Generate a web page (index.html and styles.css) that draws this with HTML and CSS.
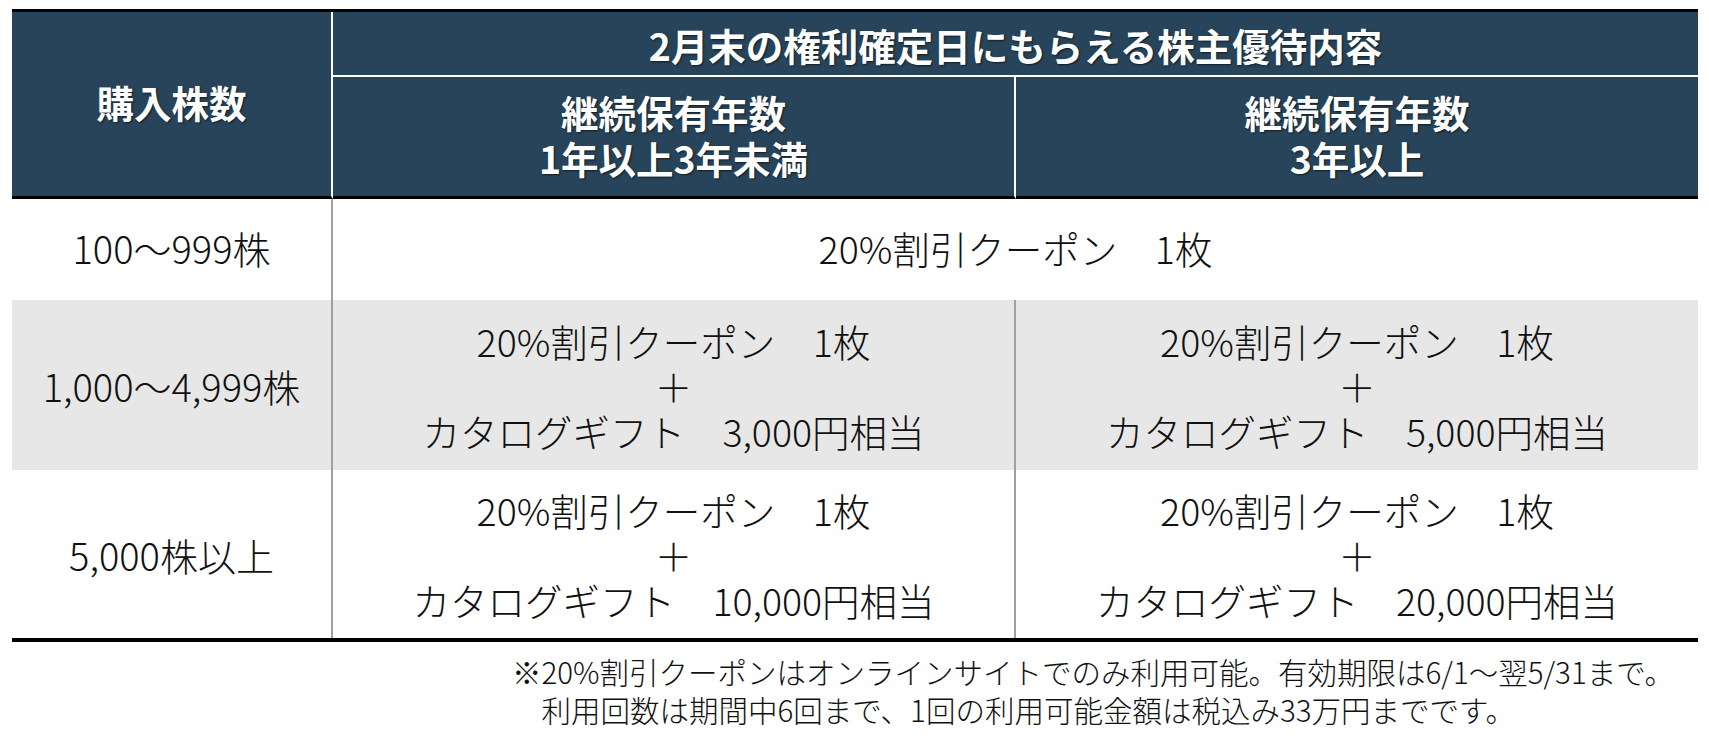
FILE: index.html
```html
<!DOCTYPE html>
<html lang="ja">
<head>
<meta charset="utf-8">
<title>株主優待内容</title>
<link rel="stylesheet" href="styles.css">
</head>
<body>
<div class="page">
  <div class="grid">
    <div class="hd corner">購入株数</div>
    <div class="hd title">2月末の権利確定日にもらえる株主優待内容</div>
    <div class="hd sub mid"><span class="ln">継続保有年数</span><span class="ln">1年以上3年未満</span></div>
    <div class="hd sub"><span class="ln">継続保有年数</span><span class="ln">3年以上</span></div>

    <div class="cell key r1">100～999株</div>
    <div class="cell span r1">20%割引クーポン　1枚</div>

    <div class="cell key r2 gray">1,000～4,999株</div>
    <div class="cell r2 gray mid"><span class="ln">20%割引クーポン　1枚</span><span class="ln">＋</span><span class="ln">カタログギフト　3,000円相当</span></div>
    <div class="cell r2 gray"><span class="ln">20%割引クーポン　1枚</span><span class="ln">＋</span><span class="ln">カタログギフト　5,000円相当</span></div>

    <div class="cell key r3">5,000株以上</div>
    <div class="cell r3 mid"><span class="ln">20%割引クーポン　1枚</span><span class="ln">＋</span><span class="ln">カタログギフト　10,000円相当</span></div>
    <div class="cell r3"><span class="ln">20%割引クーポン　1枚</span><span class="ln">＋</span><span class="ln">カタログギフト　20,000円相当</span></div>
  </div>
  <div class="note">
    <p>※20%割引クーポンはオンラインサイトでのみ利用可能。有効期限は6/1～翌5/31まで。</p>
    <p>　利用回数は期間中6回まで、1回の利用可能金額は税込み33万円までです。</p>
  </div>
</div>
</body>
</html>
```

FILE: styles.css
```css
html, body {
  margin: 0;
  padding: 0;
  background: #ffffff;
}

body {
  font-family: "Noto Sans CJK JP", "Noto Sans", sans-serif;
  color: #111111;
}

.page {
  padding: 9px 0 0 12px;
}

.grid {
  display: grid;
  grid-template-columns: 321px 683px 682px;
  grid-template-rows: 65px 122px 101px 170px 168px;
  width: 1686px;
  border-top: 3px solid #000000;
  border-bottom: 4px solid #000000;
}

.hd {
  background: #27445a;
  color: #ffffff;
  font-weight: 700;
  font-size: 37.5px;
  line-height: 46px;
  text-align: center;
  display: flex;
  flex-direction: column;
  align-items: center;
  justify-content: center;
  text-shadow: 1px 1px 2px rgba(0, 0, 0, 0.6);
  box-sizing: border-box;
}

.ln {
  display: block;
  white-space: nowrap;
}

.corner {
  grid-row: 1 / 3;
  border-right: 2px solid #ffffff;
  border-bottom: 3px solid #000000;
  padding-bottom: 4px;
}

.title {
  grid-column: 2 / 4;
  border-bottom: 2px solid #ffffff;
  padding-top: 2px;
}

.sub {
  border-bottom: 3px solid #000000;
  padding-bottom: 4px;
}

.hd.mid {
  border-right: 2px solid #ffffff;
}

.cell {
  font-size: 37.5px;
  font-weight: 300;
  line-height: 45px;
  text-align: center;
  display: flex;
  flex-direction: column;
  align-items: center;
  justify-content: center;
  box-sizing: border-box;
}

.key {
  font-size: 38px;
  border-right: 2px solid #a0a0a0;
}

.span {
  grid-column: 2 / 4;
}

.cell.mid {
  border-right: 2px solid #a0a0a0;
}

.gray {
  background: #e7e7e7;
}

.r1 {
  padding-bottom: 4px;
}

.note {
  margin-top: 10px;
  padding-left: 500px;
  font-size: 29.5px;
  font-weight: 300;
  line-height: 38px;
  color: #111111;
}

.note p {
  margin: 0;
  white-space: nowrap;
}
```
